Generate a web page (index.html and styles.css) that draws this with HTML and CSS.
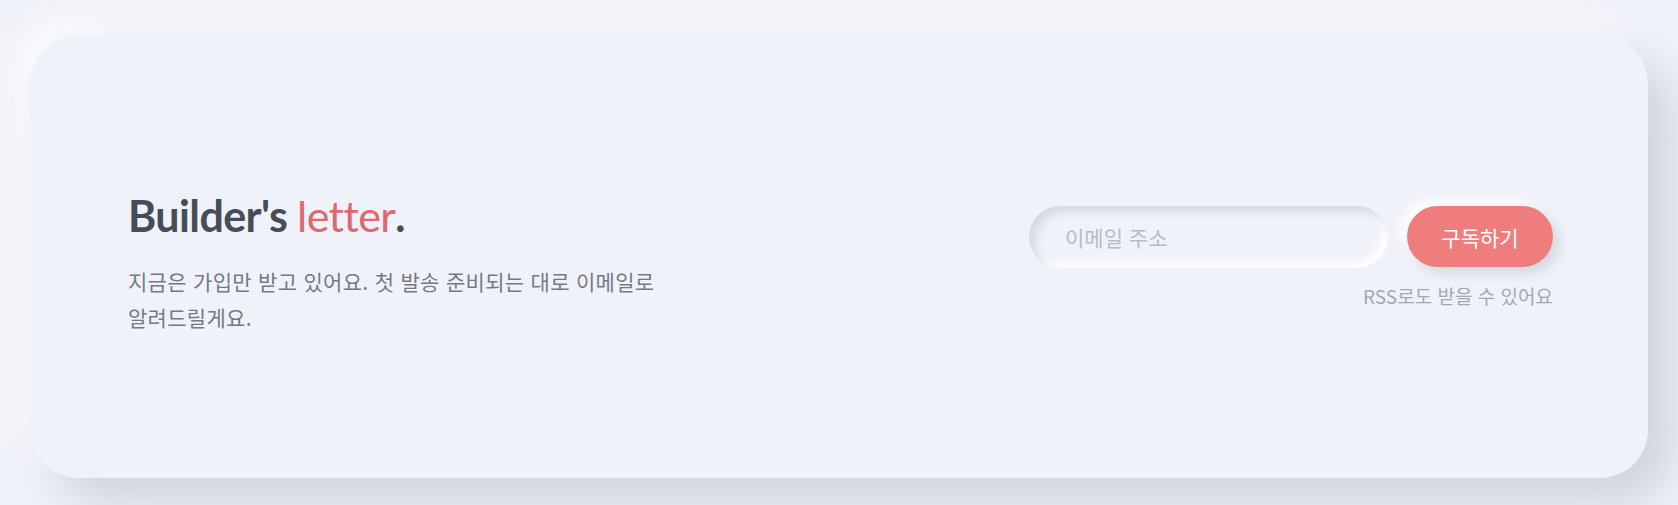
FILE: index.html
```html
<!DOCTYPE html>
<html lang="ko">
<head>
<meta charset="utf-8">
<title>Builder's letter</title>
<link rel="stylesheet" href="styles.css">
</head>
<body>
<main class="page">
  <section class="card">
    <div class="intro">
      <h1 class="title">Builder's <span class="accent">letter</span>.</h1>
      <p class="desc">지금은 가입만 받고 있어요. 첫 발송 준비되는 대로 이메일로 알려드릴게요.</p>
    </div>
    <div class="signup">
      <form class="form-row">
        <input class="email" type="email" placeholder="이메일 주소">
        <button class="subscribe" type="button">구독하기</button>
      </form>
      <p class="rss">RSS로도 받을 수 있어요</p>
    </div>
  </section>
</main>
</body>
</html>
```

FILE: styles.css
```css
* {
  box-sizing: border-box;
}

html, body {
  margin: 0;
  padding: 0;
  background: #f0f2f9;
}

body {
  font-family: "Noto Sans CJK KR", "Noto Sans", sans-serif;
  overflow: hidden;
}

.page {
  padding: 36px 30px 80px;
}

.card {
  height: 442px;
  background: #f0f2f9;
  border-radius: 48px;
  box-shadow: 24px 24px 48px #cfd2dc, -18px -18px 36px rgba(255, 255, 255, 0.7);
  display: flex;
  align-items: center;
  justify-content: space-between;
  padding: 0 95px 0 98px;
}

.intro {
  display: flex;
  flex-direction: column;
  margin-top: 10px;
}

.title {
  margin: 0;
  font-family: "Lato", "Inter", sans-serif;
  font-weight: 700;
  font-size: 43px;
  line-height: 52px;
  letter-spacing: -0.6px;
  color: #444d59;
}

.accent {
  font-weight: 400;
  color: #e0676c;
}

.desc {
  margin: 21px 0 0;
  max-width: 560px;
  font-size: 21px;
  line-height: 36px;
  letter-spacing: 0.3px;
  word-break: keep-all;
  color: #737a87;
}

.signup {
  display: flex;
  flex-direction: column;
  align-items: flex-end;
}

.form-row {
  display: flex;
  align-items: center;
  gap: 19px;
  margin: 0;
}

.email {
  width: 359px;
  height: 62px;
  border: none;
  outline: none;
  border-radius: 31px;
  background: #f0f2f9;
  box-shadow: inset 6px 6px 10px #d6d9e3, inset -6px -6px 10px #ffffff;
  padding: 0 36px;
  font-family: "Noto Sans CJK KR", "Noto Sans", sans-serif;
  font-size: 21px;
  color: #444d59;
}

.email::placeholder {
  color: #b7bbc7;
}

.subscribe {
  width: 146px;
  height: 61px;
  border: none;
  border-radius: 31px;
  background: #f07d7d;
  color: #ffffff;
  font-family: "Noto Sans CJK KR", "Noto Sans", sans-serif;
  font-size: 21px;
  box-shadow: 6px 6px 14px #d3d6df, -6px -6px 14px #ffffff;
  cursor: pointer;
}

.rss {
  margin: 14px 0 0;
  font-size: 19px;
  line-height: 27px;
  color: #a2a8b5;
}
```
